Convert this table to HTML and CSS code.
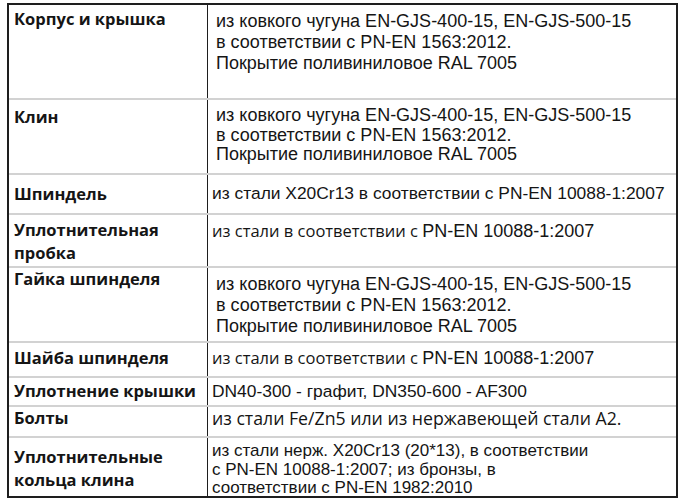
FILE: index.html
```html
<!DOCTYPE html>
<html lang="ru">
<head>
<meta charset="utf-8">
<link rel="stylesheet" href="styles.css">
</head>
<body>
<div class="spec">
  <div class="row r1">
    <div class="name">Корпус и крышка</div>
    <div class="val arial big">из ковкого чугуна EN-GJS-400-15, EN-GJS-500-15<br>в соответствии с PN-EN 1563:2012.<br>Покрытие поливиниловое RAL 7005</div>
  </div>
  <div class="row r2">
    <div class="name">Клин</div>
    <div class="val arial big">из ковкого чугуна EN-GJS-400-15, EN-GJS-500-15<br>в соответствии с PN-EN 1563:2012.<br>Покрытие поливиниловое RAL 7005</div>
  </div>
  <div class="row r3">
    <div class="name">Шпиндель</div>
    <div class="val arial tight">из стали X20Cr13 в соответствии с PN-EN 10088-1:2007</div>
  </div>
  <div class="row r4">
    <div class="name two">Уплотнительная<br>пробка</div>
    <div class="val open tight">из стали в соответствии с <span class="arial">PN-EN 10088-1:2007</span></div>
  </div>
  <div class="row r5">
    <div class="name">Гайка шпинделя</div>
    <div class="val arial big">из ковкого чугуна EN-GJS-400-15, EN-GJS-500-15<br>в соответствии с PN-EN 1563:2012.<br>Покрытие поливиниловое RAL 7005</div>
  </div>
  <div class="row r6">
    <div class="name">Шайба шпинделя</div>
    <div class="val open tight">из стали в соответствии с <span class="arial">PN-EN 10088-1:2007</span></div>
  </div>
  <div class="row r7">
    <div class="name">Уплотнение крышки</div>
    <div class="val arial tight">DN40-300 - графит, DN350-600 - AF300</div>
  </div>
  <div class="row r8">
    <div class="name">Болты</div>
    <div class="val open tight wide">из стали Fe/Zn5 или из нержавеющей стали A2.</div>
  </div>
  <div class="row r9">
    <div class="name two">Уплотнительные<br>кольца клина</div>
    <div class="val arial tight small">из стали нерж. X20Cr13 (20*13), в соответствии<br>с PN-EN 10088-1:2007; из бронзы, в<br>соответствии с PN-EN 1982:2010</div>
  </div>
</div>
</body>
</html>
```
FILE: styles.css
```css
html, body {
  margin: 0;
  padding: 0;
  background: #ffffff;
}

body {
  padding: 3px 0 0 7px;
  color: #151515;
}

.spec {
  width: 671px;
  box-sizing: border-box;
  border: 2px solid #1e1e1e;
}

.row {
  display: grid;
  grid-template-columns: 199px 1fr;
  border-top: 2px solid #d2d2d2;
  box-sizing: border-box;
}

.row.r1 { border-top: none; }

.name {
  font-family: "Open Sans", "Liberation Sans", sans-serif;
  font-weight: 700;
  font-size: 16.5px;
  line-height: 20px;
  padding-left: 5px;
  border-right: 1.5px solid #1e1e1e;
}

.name.two { line-height: 22.5px; }

.val {
  padding-left: 8px;
  font-size: 17.4px;
}

.arial {
  font-family: "Liberation Sans", Arial, sans-serif;
  line-height: 21px;
}

.val.big { font-size: 18px; }
.val.small { font-size: 17px; }

.open {
  font-family: "Open Sans", "Liberation Sans", sans-serif;
  font-size: 16.5px;
  line-height: 20px;
  padding-left: 4px;
}

.open.wide { font-size: 17.7px; }

.open .arial { font-size: 18px; line-height: 20px; }

.val.tight { padding-left: 4px; }

.r1 { height: 93px; }
.r1 .name { padding-top: 4px; }
.r1 .val { padding-top: 6px; }

.r2 { height: 75px; }
.r2 .name { padding-top: 7px; }
.r2 .val { padding-top: 6px; line-height: 19.5px; }

.r3 { height: 40px; }
.r3 .name { padding-top: 9px; }
.r3 .val { padding-top: 8px; }

.r4 { height: 53px; }
.r4 .name { padding-top: 4px; }
.r4 .val { padding-top: 6px; }

.r5 { height: 75px; }
.r5 .name { padding-top: 1px; }
.r5 .val { padding-top: 6px; line-height: 21px; }

.r6 { height: 35px; }
.r6 .name { padding-top: 5px; }
.r6 .val { padding-top: 5px; }

.r7 { height: 29px; }
.r7 .name { padding-top: 3px; }
.r7 .val { padding-top: 3px; }

.r8 { height: 31px; }
.r8 .name { padding-top: 1px; }
.r8 .val { padding-top: 1px; }

.r9 { height: 60px; }
.r9 .name { padding-top: 8px; }
.r9 .val { padding-top: 4px; line-height: 18.5px; }
```
